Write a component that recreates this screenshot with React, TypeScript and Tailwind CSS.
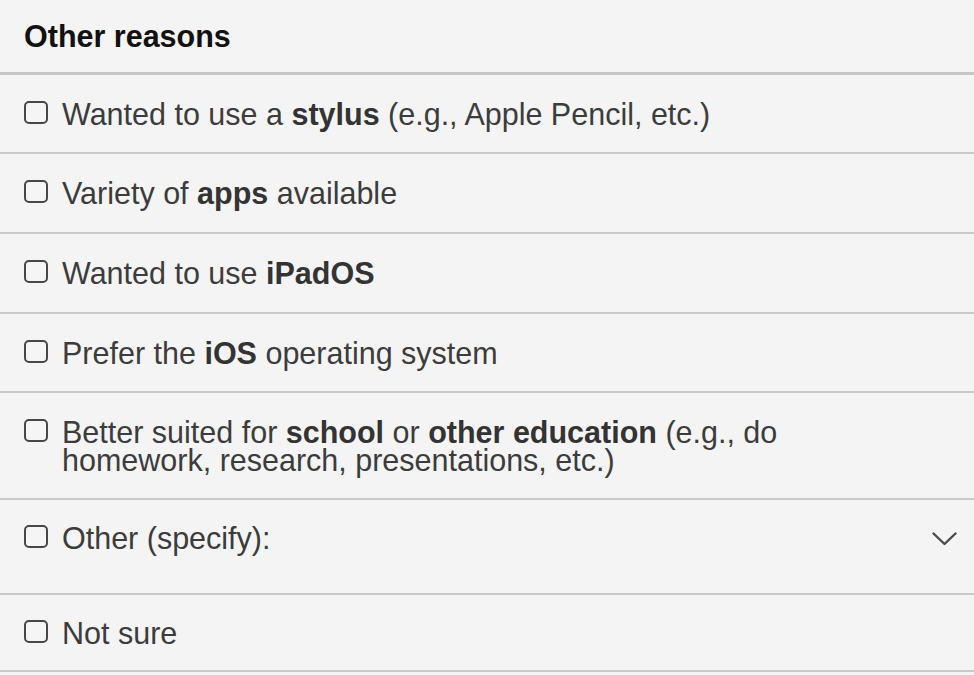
import { ReactNode } from 'react';

type Reason = {
  id: string;
  label: ReactNode;
  rowClass: string;
  dropdown?: boolean;
};

const reasons: Reason[] = [
  {
    id: 'stylus',
    label: (
      <>
        Wanted to use a <b>stylus</b> (e.g., Apple Pencil, etc.)
      </>
    ),
    rowClass: 'pt-[25px] pb-[24px]',
  },
  {
    id: 'apps',
    label: (
      <>
        Variety of <b>apps</b> available
      </>
    ),
    rowClass: 'pt-[25px] pb-[25px]',
  },
  {
    id: 'ipados',
    label: (
      <>
        Wanted to use <b>iPadOS</b>
      </>
    ),
    rowClass: 'pt-[25px] pb-[25px]',
  },
  {
    id: 'ios',
    label: (
      <>
        Prefer the <b>iOS</b> operating system
      </>
    ),
    rowClass: 'pt-[25px] pb-[24px]',
  },
  {
    id: 'school',
    label: (
      <>
        Better suited for <b>school</b> or <b>other education</b> (e.g., do homework, research, presentations, etc.)
      </>
    ),
    rowClass: 'pt-[25px] pb-[24px]',
  },
  {
    id: 'other',
    label: <>Other (specify):</>,
    rowClass: 'pt-[24px] pb-[41px]',
    dropdown: true,
  },
  {
    id: 'notsure',
    label: <>Not sure</>,
    rowClass: 'pt-[24px] pb-[23px]',
  },
];

function Checkbox() {
  return (
    <span className="mt-[1px] block h-[23px] w-[24px] shrink-0 rounded-[5px] border-[2.5px] border-[#474747] bg-[#f5f5f5]" />
  );
}

function Chevron() {
  return (
    <svg width="25" height="14" viewBox="0 0 25 14" fill="none" className="ml-auto mt-[8px] shrink-0">
      <path d="M1.5 1.5 L12.5 12 L23.5 1.5" stroke="#4a4a4a" strokeWidth="2.4" strokeLinecap="round" strokeLinejoin="round" />
    </svg>
  );
}

export default function App() {
  return (
    <div
      className="min-h-[675px] w-full bg-[#f4f4f4]"
      style={{ fontFamily: '"Liberation Sans", Arial, sans-serif' }}
    >
      {/* Header */}
      <div className="flex h-[75px] items-center border-b-[3px] border-[#c6c6c6] px-[24px]">
        <h2 className="text-[30.5px] font-bold leading-none text-[#111]">Other reasons</h2>
      </div>

      {/* Options */}
      {reasons.map((r) => (
        <label
          key={r.id}
          className={`flex items-start border-b-2 border-[#c9c9c9] pl-[24px] pr-[17px] ${r.rowClass}`}
        >
          <Checkbox />
          <span className="ml-[14px] max-w-[820px] text-[30.5px] leading-[28px] text-[#3c3c3c] [&_b]:text-[#333]">
            {r.label}
          </span>
          {r.dropdown && <Chevron />}
        </label>
      ))}
    </div>
  );
}
